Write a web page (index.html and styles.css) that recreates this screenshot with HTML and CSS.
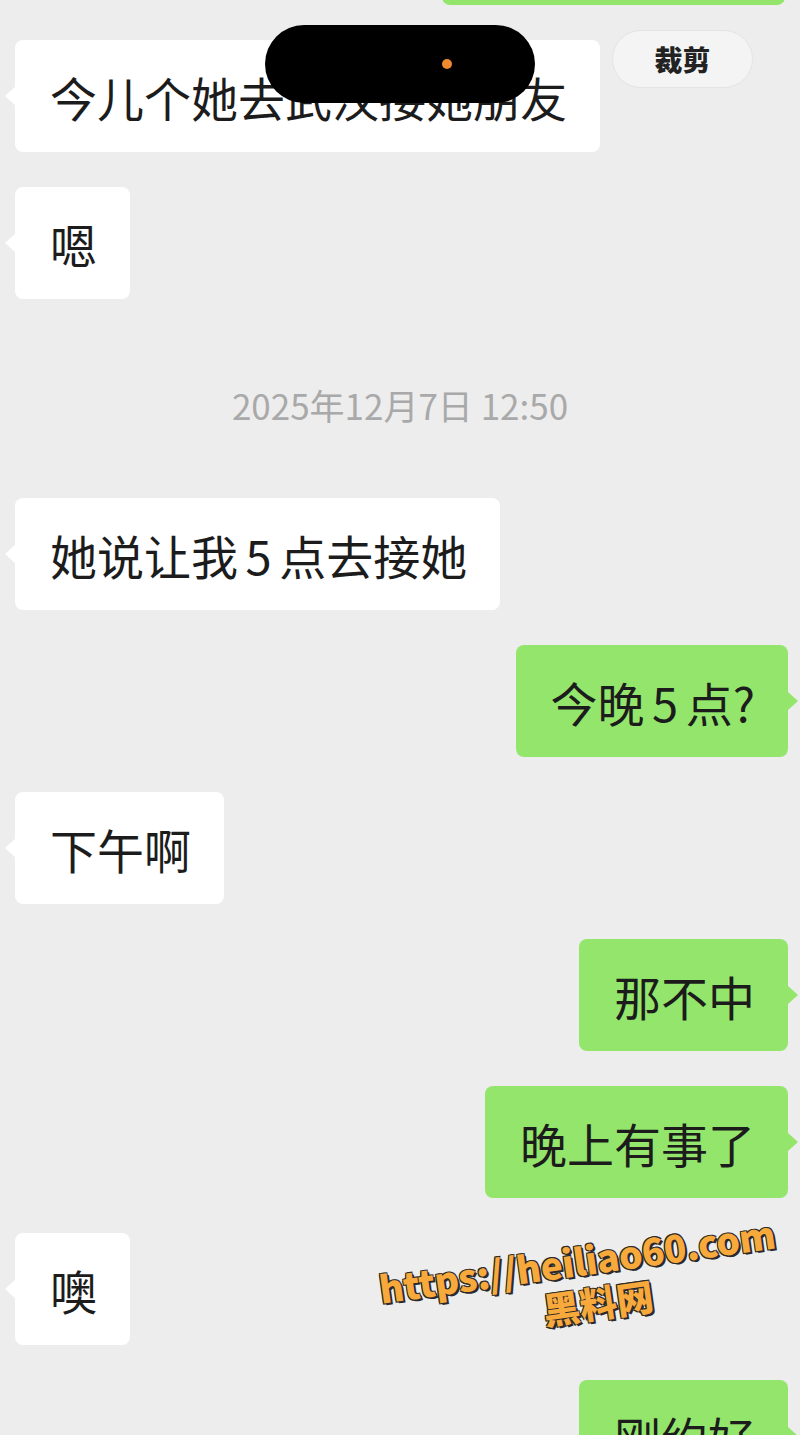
FILE: index.html
```html
<!DOCTYPE html>
<html lang="zh-CN">
<head>
<meta charset="utf-8">
<title>聊天记录</title>
<link rel="stylesheet" href="styles.css">
</head>
<body>
<div class="screen">
  <div class="chat">
    <div class="bubble out"><span class="blank">&nbsp;</span></div>
    <div class="bubble in">今儿个她去武汉接她朋友</div>
    <div class="bubble in">嗯</div>
    <div class="time">2025年12月7日 12:50</div>
    <div class="bubble in">她说让我 5 点去接她</div>
    <div class="bubble out">今晚 5 点?</div>
    <div class="bubble in">下午啊</div>
    <div class="bubble out">那不中</div>
    <div class="bubble out">晚上有事了</div>
    <div class="bubble in">噢</div>
    <div class="bubble out">刚约好</div>
  </div>
  <div class="island"><span class="dot"></span></div>
  <div class="crop">裁剪</div>
  <div class="watermark">
    <div class="wm-url">https://heiliao60.com</div>
    <div class="wm-name">黑料网</div>
  </div>
</div>
</body>
</html>
```
FILE: styles.css
```css
html, body {
  margin: 0;
  padding: 0;
  background: #ededed;
}
.screen {
  position: relative;
  width: 800px;
  height: 1435px;
  overflow: hidden;
  background: #ededed;
  font-family: "Noto Sans CJK SC", "Noto Sans", sans-serif;
}
.chat {
  display: flex;
  flex-direction: column;
  gap: 35px;
  margin-top: -107px;
}
.bubble {
  position: relative;
  box-sizing: border-box;
  height: 112px;
  padding: 0 33px 0 35px;
  display: flex;
  align-items: center;
  font-size: 47px;
  word-spacing: -3px;
  color: #1c1c1c;
  border-radius: 8px;
  white-space: pre;
}
.bubble.in {
  align-self: flex-start;
  margin-left: 15px;
  background: #ffffff;
}
.bubble.in::before {
  content: "";
  position: absolute;
  left: -10px;
  top: 50%;
  margin-top: -9px;
  border-style: solid;
  border-width: 9px 10px 9px 0;
  border-color: transparent #ffffff transparent transparent;
}
.bubble.out {
  align-self: flex-end;
  margin-right: 12px;
  background: #93e66b;
}
.bubble.out::after {
  content: "";
  position: absolute;
  right: -10px;
  top: 50%;
  margin-top: -9px;
  border-style: solid;
  border-width: 9px 0 9px 10px;
  border-color: transparent transparent transparent #93e66b;
}
.chat > .bubble.out:first-child {
  width: 343px;
  margin-right: 15px;
}
.time {
  box-sizing: border-box;
  height: 129px;
  padding-top: 12px;
  display: flex;
  align-items: center;
  justify-content: center;
  font-size: 35px;
  color: #a9a9a9;
}
.island {
  position: absolute;
  top: 25px;
  left: 265px;
  width: 270px;
  height: 78px;
  border-radius: 39px;
  background: #000;
}
.dot {
  position: absolute;
  left: 177px;
  top: 34px;
  width: 10px;
  height: 10px;
  border-radius: 50%;
  background: #f08a2e;
}
.crop {
  position: absolute;
  top: 30px;
  left: 612px;
  width: 141px;
  height: 58px;
  box-sizing: border-box;
  border: 1px solid #e4e4e4;
  border-radius: 29px;
  background: #f4f4f4;
  display: flex;
  align-items: center;
  justify-content: center;
  font-size: 28px;
  font-weight: 900;
  color: #222;
}
.watermark {
  position: absolute;
  left: 370px;
  top: 1238px;
  width: 420px;
  transform: rotate(-8deg);
  transform-origin: 50% 50%;
  text-align: center;
  color: #f7a93b;
  font-weight: 900;
  text-shadow: 2px 2px 0 #2a2a2a, -1px -1px 0 #2a2a2a, 1px -1px 0 #2a2a2a, -1px 1px 0 #2a2a2a;
}
.wm-url {
  font-family: "Noto Sans CJK SC", "Noto Sans", sans-serif;
  font-size: 37px;
  line-height: 44px;
  letter-spacing: -0.3px;
}
.wm-name {
  font-family: "Noto Sans CJK SC", sans-serif;
  font-size: 37px;
  line-height: 44px;
  padding-left: 30px;
}
```
